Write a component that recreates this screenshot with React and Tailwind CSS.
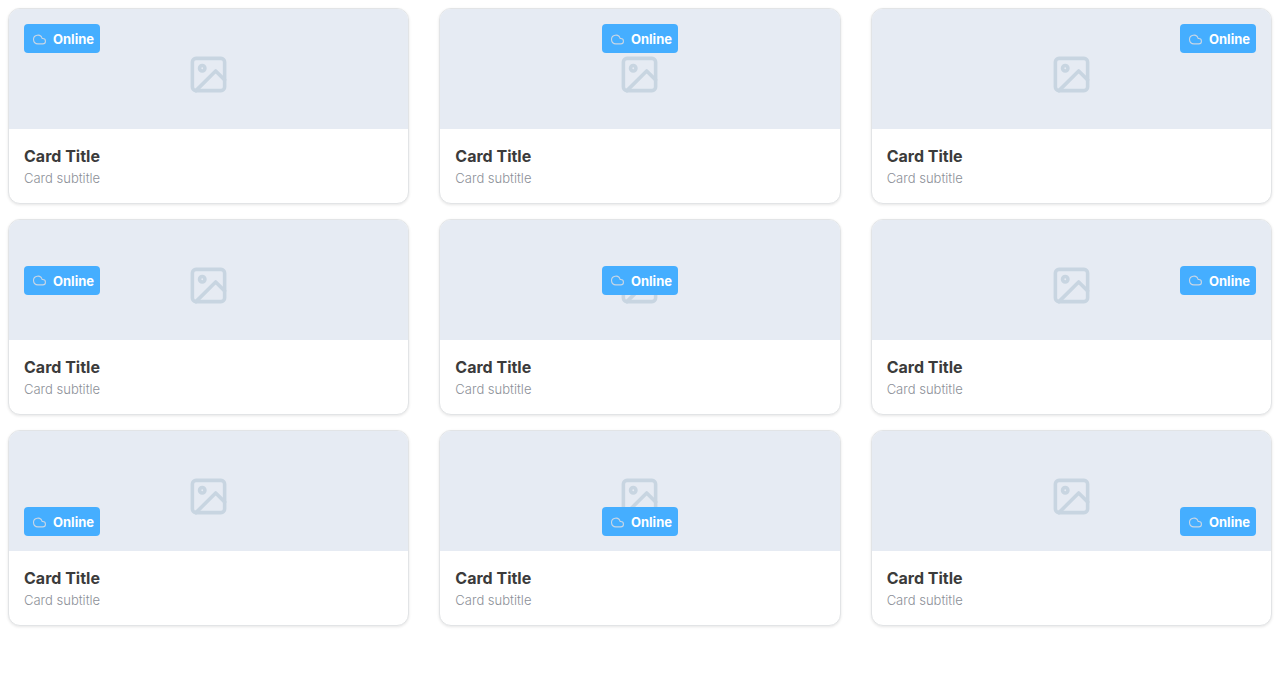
const positions = [
  'items-start justify-start',
  'items-start justify-center',
  'items-start justify-end',
  'items-center justify-start',
  'items-center justify-center',
  'items-center justify-end',
  'items-end justify-start',
  'items-end justify-center',
  'items-end justify-end',
];

function PictureIcon() {
  return (
    <svg className="size-[43px] text-[#c8d5e1]" viewBox="0 0 24 24" fill="none" stroke="currentColor" strokeWidth="2" strokeLinecap="round" strokeLinejoin="round" aria-hidden="true">
      <rect x="3" y="3" width="18" height="18" rx="2" />
      <circle cx="8.5" cy="8.5" r="1.5" />
      <path d="M21 15l-5-5L5 21" />
    </svg>
  );
}

function CloudIcon() {
  return (
    <svg className="size-[13px] text-[#c8d6e5]" viewBox="0 0 24 24" fill="none" stroke="currentColor" strokeWidth="2" strokeLinecap="round" strokeLinejoin="round" aria-hidden="true">
      <path d="M18 10h-1.26A8 8 0 1 0 9 20h9a5 5 0 0 0 0-10z" />
    </svg>
  );
}

function Card({ position }) {
  return (
    <article className="overflow-hidden rounded-xl border border-[#e2e4e6] bg-white shadow-[0_1px_3px_rgba(0,0,0,0.1)]">
      <div className="relative flex h-30 items-center justify-center bg-[#e6ebf3] pt-2.5">
        <PictureIcon />
        <div className={`absolute inset-0 flex p-[15px] ${position}`}>
          <span className="flex items-center gap-[7px] rounded bg-[#45aeff] pt-[5px] pr-[6px] pb-1 pl-[9px] text-[13px] leading-5 font-bold text-white">
            <CloudIcon />
            Online
          </span>
        </div>
      </div>
      <div className="p-[15px]">
        <h2 className="text-base leading-6 font-bold text-[#3b3b3b]">Card Title</h2>
        <p className="text-[13px] leading-5 font-light text-[#8c9098]">Card subtitle</p>
      </div>
    </article>
  );
}

export default function App() {
  return (
    <main className="grid grid-cols-3 gap-x-[30px] gap-y-[15px] p-2 font-['Inter',sans-serif]">
      {positions.map((position, index) => (
        <Card key={index} position={position} />
      ))}
    </main>
  );
}
